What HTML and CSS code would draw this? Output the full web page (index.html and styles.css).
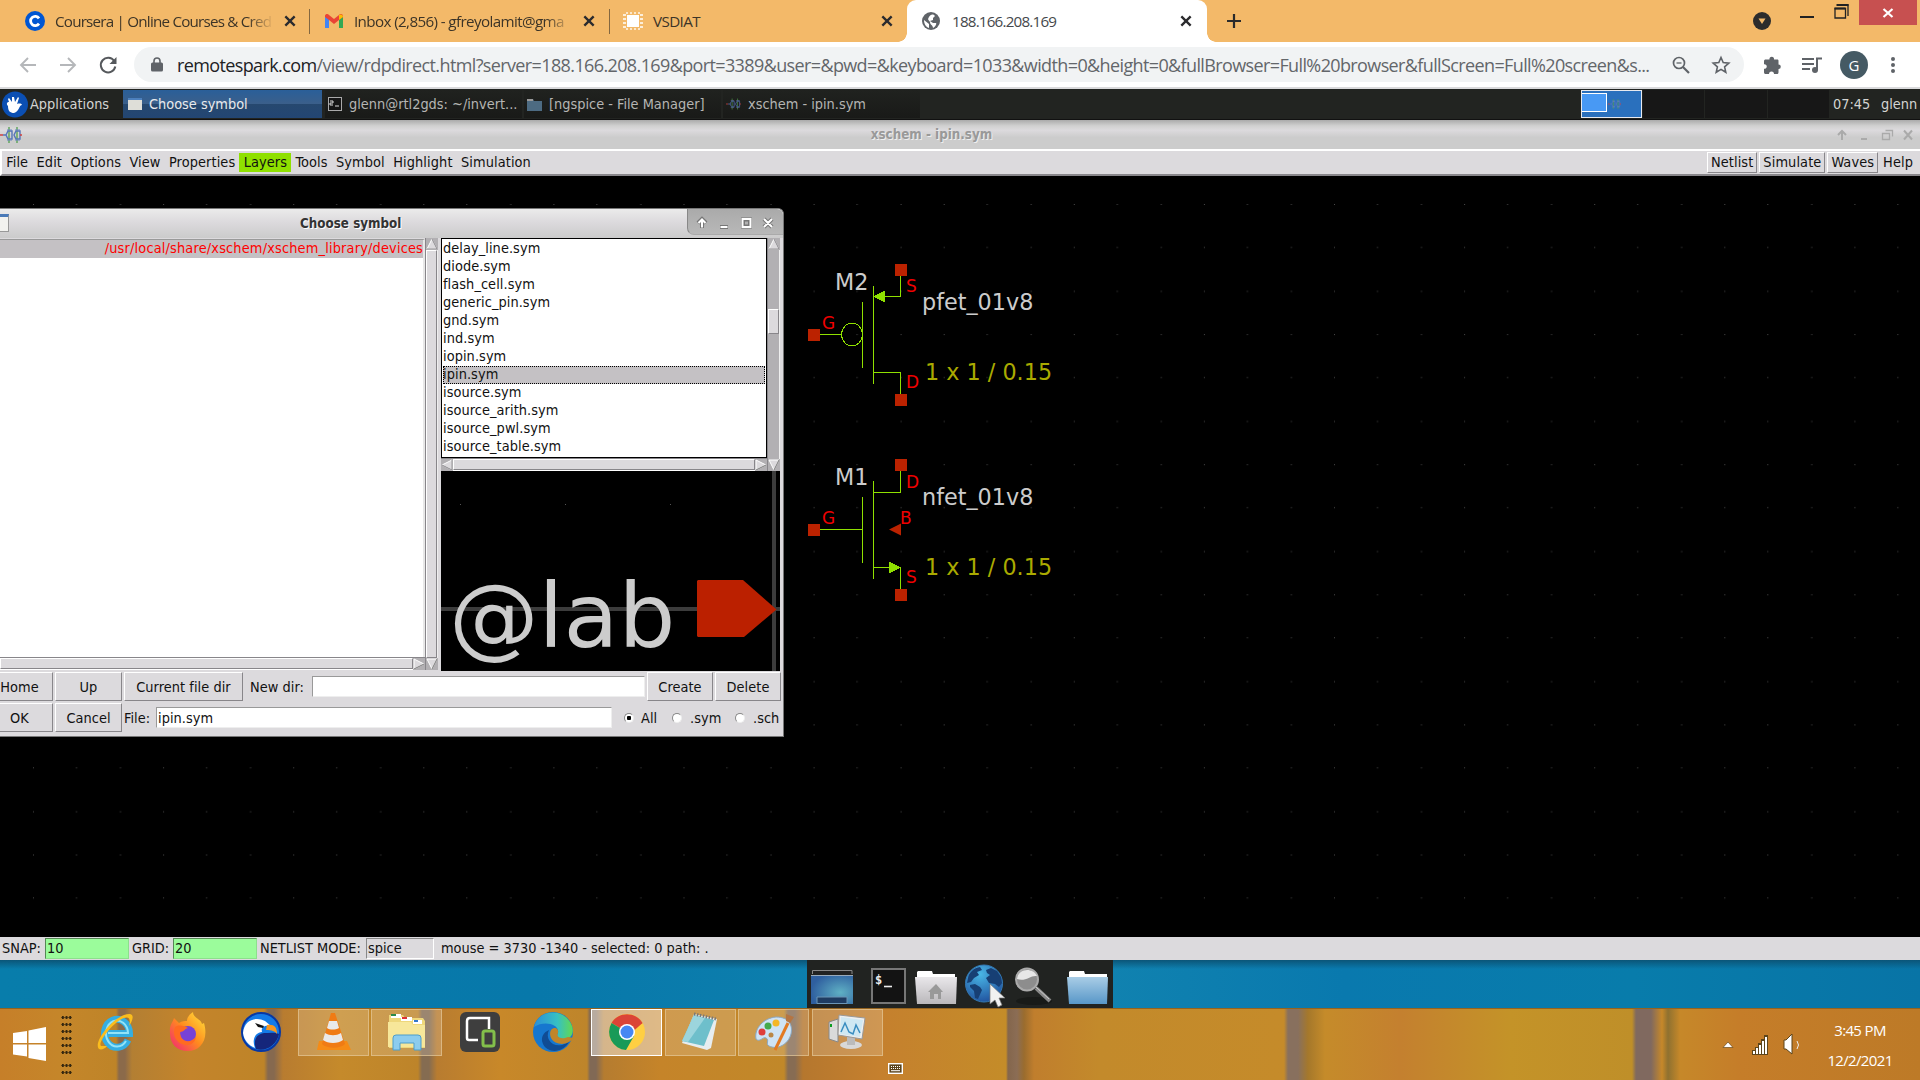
FILE: index.html
```html
<!DOCTYPE html>
<html lang="en">
<head>
<meta charset="utf-8">
<title>188.166.208.169</title>
<link rel="stylesheet" href="styles.css">
</head>
<body>
<svg class="defs" width="0" height="0">
  <defs>
    <symbol id="x" viewBox="0 0 12 12"><path d="M2 2l8 8M10 2l-8 8" stroke="#2b2b2e" stroke-width="2" fill="none"/></symbol>
    <symbol id="chip" viewBox="0 0 22 16"><path d="M9 0v16M17 0v16" stroke="#52a04e" stroke-width="1.300"/><path d="M3 8h3M6 8l2-4h4v8H8zM14 8l2-4h4v8h-4z" fill="none" stroke="#5575b8" stroke-width="1.400"/><path d="M7 3h5M7 13h5M15 3h5M15 13h5" stroke="#6b86c0"/><path d="M0 8h3M20 8h2" stroke="#d04040" stroke-width="1.500"/></symbol>
    <symbol id="up" viewBox="0 0 12 12"><rect width="12" height="12" fill="#b2b0b3"/><path d="M6 1L1 11h10z" fill="#dcdadd" stroke="#fff"/><path d="M6 1l5 10H1" fill="none" stroke="#88868a"/></symbol>
    <symbol id="down" viewBox="0 0 12 12"><rect width="12" height="12" fill="#b2b0b3"/><path d="M1 1h10L6 11z" fill="#dcdadd" stroke="#fff"/><path d="M11 1L6 11" stroke="#777"/></symbol>
    <symbol id="left" viewBox="0 0 12 12"><rect width="12" height="12" fill="#b2b0b3"/><path d="M1 6l10-5v10z" fill="#dcdadd" stroke="#fff"/><path d="M11 1v10L1 6" fill="none" stroke="#88868a"/></symbol>
    <symbol id="right" viewBox="0 0 12 12"><rect width="12" height="12" fill="#b2b0b3"/><path d="M11 6L1 1v10z" fill="#dcdadd" stroke="#fff"/><path d="M11 6L1 11" stroke="#777"/></symbol>
    <linearGradient id="blue" x1="0" y1="0" x2="0" y2="1"><stop offset="0" stop-color="#a9cde6"/><stop offset="1" stop-color="#5897c8"/></linearGradient>
    <linearGradient id="gray" x1="0" y1="0" x2="0" y2="1"><stop offset="0" stop-color="#e9e7ea"/><stop offset="1" stop-color="#bab8bb"/></linearGradient>
    <radialGradient id="earth" cx=".4" cy=".25" r=".8"><stop offset="0" stop-color="#49b6e6"/><stop offset="1" stop-color="#1f4f9c"/></radialGradient>
    <radialGradient id="desk" cx=".7" cy=".6" r=".7"><stop offset="0" stop-color="#5fb0c4"/><stop offset="1" stop-color="#2f5f9f"/></radialGradient>
    <linearGradient id="edge" x1="0" y1="0" x2="1" y2="0"><stop offset="0" stop-color="#2a8fd8"/><stop offset=".6" stop-color="#36c0c4"/><stop offset="1" stop-color="#63d94f"/></linearGradient>
    <linearGradient id="fire" x1="1" y1="0" x2="0" y2="1"><stop offset="0" stop-color="#ffe63c"/><stop offset=".5" stop-color="#ff8a1e"/><stop offset="1" stop-color="#f2207a"/></linearGradient>
  </defs>
</svg>

<header class="tabs">
  <div class="tab t1">
    <svg width="20" height="20" viewBox="0 0 20 20"><circle cx="10" cy="10" r="10" fill="#0056d2"/><path d="M14 7.400A4.600 4.600 0 1 0 14 12.600" fill="none" stroke="#fff" stroke-width="2.800"/></svg>
    <span class="label fade">Coursera | Online Courses &amp; Cred</span><svg class="close" width="14" height="14"><use href="#x"/></svg>
  </div>
  <div class="tab t2">
    <svg width="18" height="14" viewBox="0 0 18 14"><path d="M0 1.500V14h4V6l5 4 5-4v8h4V1.500C17-.3 15-.3 14 1L9 5 4 1C3-.3 1-.3 0 1.500z" fill="#ea4335"/><path d="M0 3v11h4V6z" fill="#4285f4"/><path d="M18 3v11h-4V6z" fill="#34a853"/><path d="M14 1v5l4-3C18 0 15.500 0 14 1z" fill="#fbbc04"/></svg>
    <span class="label fade">Inbox (2,856) - gfreyolamit@gma</span><svg class="close" width="14" height="14"><use href="#x"/></svg>
  </div>
  <div class="tab t3">
    <svg width="20" height="20" viewBox="0 0 20 20"><path d="M4 1v18M8 1v18M12 1v18M16 1v18M0 4h20M0 8h20M0 12h20M0 16h20" stroke="#fff" stroke-width="1.300"/><rect x="3" y="3" width="14" height="14" fill="#f3b969"/><rect x="4" y="4" width="12" height="12" fill="#fff"/></svg>
    <span class="label">VSDIAT</span><svg class="close" width="14" height="14"><use href="#x"/></svg>
  </div>
  <div class="tab active">
    <svg width="18" height="18" viewBox="0 0 18 18"><circle cx="9" cy="9" r="9" fill="#5f6368"/><path d="M2 8l5 4v4C4 15 2 12 2 8zM7 5c1-2 3-3 5-2l1 1-2 2v2l-3 1 3 2h3c1 1-1 4-3 5 0-3-3-3-3-6-1-2-3-2-1-5z" fill="#fff"/></svg>
    <span class="label">188.166.208.169</span><svg class="close" width="14" height="14"><use href="#x"/></svg>
  </div>
  <svg class="plus" width="16" height="16" viewBox="0 0 16 16"><path d="M8 1v14M1 8h14" stroke="#2b2b2b" stroke-width="2.200"/></svg>
  <div class="winctl">
    <svg width="18" height="18" viewBox="0 0 18 18"><circle cx="9" cy="9" r="9" fill="#2c2c2c"/><path d="M5.500 6.500h7L9 12z" fill="#f3b969"/></svg>
    <i class="min"></i>
    <svg class="restore" width="15" height="15" viewBox="0 0 15 15"><path d="M3 1h11v11M1 4.500h10.500v9.500H1z" fill="none" stroke="#222" stroke-width="1.300"/><path d="M2.500 1h12M.5 4.500h11" stroke="#222" stroke-width="2"/></svg>
    <div class="kill"><svg width="12" height="12" viewBox="0 0 12 12"><path d="M1.500 2l9 8M10.500 2l-9 8" stroke="#fff" stroke-width="2.200"/></svg></div>
  </div>
</header>

<div class="toolbar">
  <svg class="nav" width="18" height="18" viewBox="0 0 18 18"><path d="M17 9H2M9 2L2 9l7 7" fill="none" stroke="#b5b7ba" stroke-width="1.900"/></svg>
  <svg class="nav" width="18" height="18" viewBox="0 0 18 18"><path d="M1 9h15M9 2l7 7-7 7" fill="none" stroke="#b5b7ba" stroke-width="1.900"/></svg>
  <svg class="nav" width="18" height="18" viewBox="0 0 18 18"><path d="M15.200 5A7.300 7.300 0 1 0 16.300 10.500" fill="none" stroke="#55585c" stroke-width="2"/><path d="M17.500 1v7h-7z" fill="#55585c"/></svg>
  <div class="omni">
    <svg width="12" height="15" viewBox="0 0 12 15"><path d="M3 6V4a3 3 0 0 1 6 0v2" fill="none" stroke="#5f6368" stroke-width="1.600"/><rect y="5.500" width="12" height="9" rx="1.500" fill="#5f6368"/></svg>
    <span class="url"><b>remotespark.com</b>/view/rdpdirect.html?server=188.166.208.169&amp;port=3389&amp;user=&amp;pwd=&amp;keyboard=1033&amp;width=0&amp;height=0&amp;fullBrowser=Full%20browser&amp;fullScreen=Full%20screen&amp;s...</span>
    <svg width="18" height="18" viewBox="0 0 18 18"><circle cx="7" cy="7" r="5.500" fill="none" stroke="#5f6368" stroke-width="1.700"/><path d="M11 11l6 6" stroke="#5f6368" stroke-width="2.200"/><path d="M4.500 7h5" stroke="#5f6368" stroke-width="1.300"/></svg>
    <svg width="18" height="18" viewBox="0 0 18 18"><path d="M9 1.500l2.200 5.100 5.600.5-4.200 3.700 1.200 5.500L9 13.400l-4.800 2.900 1.200-5.500L1.200 7.100l5.600-.5z" fill="none" stroke="#5f6368" stroke-width="1.600"/></svg>
  </div>
  <div class="ext">
    <svg width="18" height="18" viewBox="0 0 18 18"><path d="M0 5.500C0 4 .5 3.500 2 3.500h3.500a2.300 2.300 0 1 1 4.500 0H13c1.500 0 1.500.5 1.500 2v3a2.300 2.300 0 1 1 0 4.600V16c0 1.500-.5 2-1.500 2h-3a2.400 2.400 0 1 0-5 0H2c-1.500 0-2-.5-2-2v-3.300a2.300 2.300 0 1 0 0-4.500z" fill="#5f6368"/></svg>
    <svg width="20" height="18" viewBox="0 0 20 18"><path d="M0 3h12M0 8h12M0 13h8M15 2v12M14 2.500h6" stroke="#5f6368" stroke-width="2"/><circle cx="13" cy="14" r="3" fill="#5f6368"/></svg>
    <span class="avatar">G</span>
    <svg width="6" height="18" viewBox="0 0 6 18"><g fill="#5f6368"><circle cx="3" cy="3" r="2"/><circle cx="3" cy="9" r="2"/><circle cx="3" cy="15" r="2"/></g></svg>
  </div>
</div>

<nav class="panel">
  <div class="apps"><svg width="29" height="27" viewBox="0 0 29 27"><ellipse cx="15" cy="13.500" rx="13" ry="13" fill="#0b4fb3"/><path d="M8 15c-2-2-1-4 1-4l-1-3 1-1 3 4 0-5h2l1 5 3-5 1 1-2 6c3-1 5 0 5 1-3 0-3 7-8 8-4 0-6-2-6-7z" fill="#fff"/></svg><span>Applications</span></div>
  <div class="task on"><svg width="14" height="12" viewBox="0 0 14 12"><rect width="14" height="12" fill="#deded8"/><path d="M0 1h14" stroke="#4c80bd" stroke-width="2"/></svg><span>Choose symbol</span></div>
  <div class="task"><svg width="14" height="14" viewBox="0 0 14 14"><rect x=".5" y=".5" width="13" height="13" fill="#161616" stroke="#aaa"/><path d="M2 4h3v2h-3v2h3M7 9h4" stroke="#ddd" fill="none"/></svg><span>glenn@rtl2gds: ~/invert...</span></div>
  <div class="task"><svg width="15" height="13" viewBox="0 0 15 13"><path d="M0 1h6l1 2h8v10H0z" fill="#4d6b82"/><path d="M0 1h6v2h-6z" fill="#999"/></svg><span>[ngspice - File Manager]</span></div>
  <div class="task"><svg class="dim" width="15" height="14"><use href="#chip"/></svg><span>xschem - ipin.sym</span></div>
  <div class="pager"><div class="cell cur"><i></i><svg width="13" height="14"><use href="#chip"/></svg></div><div class="cell"></div><div class="cell"></div><div class="cell"></div></div>
  <span class="clock">07:45</span><span class="user">glenn</span>
</nav>

<div class="wtitle">
  <svg width="22" height="16"><use href="#chip"/></svg>
  <span>xschem - ipin.sym</span>
  <svg width="76" height="14" viewBox="0 0 76 14" fill="none" stroke="#aaa" stroke-width="2"><path d="M5 12V4M1 7l4-4 4 4M24 11h6"/><path d="M45.500 5.500h7v6h-7zM48.500 2.500h7v6" stroke-width="1.300"/><path d="M67 2.500l8 9M75 2.500l-8 9"/></svg>
</div>

<div class="menu">
  <span>File</span><span>Edit</span><span>Options</span><span>View</span><span>Properties</span><span class="hot">Layers</span><span>Tools</span><span>Symbol</span><span>Highlight</span><span>Simulation</span>
  <div class="rbtns"><span class="raised">Netlist</span><span class="raised">Simulate</span><span class="raised">Waves</span><span class="help">Help</span></div>
</div>

<main class="canvas">
  <svg class="sch" width="1920" height="761" viewBox="0 176 1920 761">
    <defs><pattern id="dots" x="33" y="204" width="130.100" height="130.100" patternUnits="userSpaceOnUse"><path d="M0 .5h1M43 .5h1M87 .5h1M0 43.500h1M43 43.500h1M87 43.500h1M0 87.500h1M43 87.500h1M87 87.500h1" stroke="#4a4a4a"/></pattern></defs>
    <rect y="176" width="1920" height="761" fill="#000"/><rect y="176" width="1920" height="761" fill="url(#dots)"/>
    <g fill="none" stroke="#8fe000" shape-rendering="crispEdges">
      <path d="M900.500 276v20.500h-27M873.500 286v98M873.500 372.500h27V394M862.500 302v66M820 334.500h21"/>
      <ellipse cx="852" cy="334.500" rx="10.500" ry="11.300"/>
      <path d="M900.500 471v21.500h-27M873.500 481v98M873.500 567.500h27V589M862.500 497v66M820 529.500h42"/>
      <path d="M873 296.500l12-6v12zM901 567.500l-12-6v12z" fill="#8fe000" stroke="none"/>
    </g>
    <g fill="#bb2200"><path d="M895 264h12v12h-12zM895 394h12v12h-12zM808 329h12v12h-12zM895 459h12v12h-12zM895 589h12v12h-12zM808 524h12v12h-12zM889 529.500l12-6v12z"/></g>
    <g class="net"><text x="835" y="290">M2</text><text x="922" y="310">pfet_01v8</text><text x="835" y="485">M1</text><text x="922" y="505">nfet_01v8</text></g>
    <g class="size"><text x="925" y="380">1 x 1 / 0.15</text><text x="925" y="575">1 x 1 / 0.15</text></g>
    <g class="pin"><text x="906" y="292">S</text><text x="906" y="388">D</text><text x="822" y="329">G</text><text x="906" y="488">D</text><text x="900" y="524">B</text><text x="822" y="524">G</text><text x="906" y="583">S</text></g>
  </svg>

  <section class="dialog">
    <div class="dtitle"><i class="dicon"></i><span>Choose symbol</span>
      <div class="dctl"><svg width="76" height="14" viewBox="0 0 76 14" fill="none"><g stroke="#777" stroke-width="4"><path d="M5 12V4M1 7l4-4 4 4M23 11h8M46 3.500h7v7h-7zM67 3l8 8M75 3l-8 8"/></g><g stroke="#fff" stroke-width="2"><path d="M5 11.500V4M1.500 7L5 3.500 8.500 7M23.500 11h7M45.500 3h8v8h-8zM67 3l8 8M75 3l-8 8"/></g></svg></div>
    </div>
    <div class="panes">
      <div class="dirs"><div class="dirlist"><div>/usr/local/share/xschem/xschem_library/devices</div></div>
        <div class="vsb"><svg width="12" height="12"><use href="#up"/></svg><i></i><svg width="12" height="12"><use href="#down"/></svg></div>
        <div class="hsb"><i></i><svg width="12" height="12"><use href="#right"/></svg></div>
      </div>
      <div class="files">
        <div class="filelist"><div>delay_line.sym</div><div>diode.sym</div><div>flash_cell.sym</div><div>generic_pin.sym</div><div>gnd.sym</div><div>ind.sym</div><div>iopin.sym</div><div class="sel">ipin.sym</div><div>isource.sym</div><div>isource_arith.sym</div><div>isource_pwl.sym</div><div>isource_table.sym</div></div>
        <div class="vsb fv"><svg width="12" height="12"><use href="#up"/></svg><i></i><svg width="12" height="12"><use href="#down"/></svg></div>
        <div class="hsb"><svg width="12" height="12"><use href="#left"/></svg><i></i><svg width="12" height="12"><use href="#right"/></svg></div>
        <svg class="preview" width="339" height="200" viewBox="441 471 339 200"><rect x="441" y="471" width="339" height="200" fill="#000"/><path d="M441 609h339M774 471v200" stroke="#3c3c3c" stroke-width="4"/><path d="M460 504.500h1M565 504.500h1M670 504.500h1" stroke="#555"/><path d="M698 580h45l33.500 29.500L744 637h-46l-1-1v-55z" fill="#bb2000"/><text x="449" y="647">@lab</text></svg>
      </div>
    </div>
    <div class="row r1"><span class="btn b1">Home</span><span class="btn b2">Up</span><span class="btn b3">Current file dir</span><label>New dir:</label><span class="entry"></span><span class="btn b4">Create</span><span class="btn b5">Delete</span></div>
    <div class="row r2"><span class="btn b1">OK</span><span class="btn b2">Cancel</span><label>File:</label><span class="entry">ipin.sym</span><i class="radio on"></i><em class="e1">All</em><i class="radio"></i><em class="e2">.sym</em><i class="radio"></i><em class="e3">.sch</em></div>
  </section>
</main>

<div class="status"><span class="w1">SNAP:</span><span class="green">10</span><span class="w2">GRID:</span><span class="green">20</span><span class="w3">NETLIST MODE:</span><span class="mode">spice</span><span class="mouse">mouse = 3730 -1340 - selected: 0 path: .</span></div>

<div class="desktop">
  <div class="dock"><svg width="306" height="48" viewBox="807 960 306 48">
    <path d="M812.500 974v-3.500h39.500v3.500" fill="#222" stroke="#888"/><rect x="811" y="975" width="42" height="29" fill="url(#desk)"/><path d="M811 975.500h42" stroke="#9ab"/><path d="M817 1003.500v-6.500h30v6.500z" fill="#1f3c62" stroke="#6b95b6"/>
    <rect x="872" y="969" width="33" height="34" fill="#131313" stroke="#777" stroke-width="2"/><text class="term" x="875" y="984">$</text><path d="M884 986.500h8" stroke="#eee" stroke-width="1.600"/>
    <path d="M917 972l1-1h14l1 3h22v7h-38z" fill="#fff"/><path d="M915 977h42l-1 27h-39z" fill="url(#gray)"/><path d="M928 992l8-8 7 8h-2v7h-3v-5h-4v5h-4v-7z" fill="#999"/>
    <circle cx="984" cy="983.500" r="18.500" fill="url(#earth)" stroke="#347ab5"/><path d="M968 978c1-6 6-10 12-11l2 3-5 2 2 3-5 3-3 4-4 1zM970 985l5-1 5 3 2 3-4 9-3-1-1-7-4-4zM986 970l5-2 6 3 4 6 1 6-3 4-4-3-6-1-3-5 4-3-3-2z" fill="#173f74"/>
    <path d="M990 984v20l5-4 3 7 4-2-3-7h6z" fill="#f1f1f1" stroke="#777" stroke-width=".7"/>
    <ellipse cx="1034" cy="1001" rx="18" ry="4" fill="#181a18"/><path d="M1036 988l14 13" stroke="#888" stroke-width="4"/><path d="M1036 987l13 12" stroke="#ccc"/><circle cx="1027" cy="979.500" r="11" fill="#8d8d8d" stroke="#aaa" stroke-width="2"/><path d="M1017 979c1-11 16-12 20-3-7-1-11 6-20 3z" fill="#e7e7e7"/>
    <path d="M1069 972l1-1h14l1 3h22v7h-38z" fill="#fff"/><path d="M1067 977h41l-1 27h-38z" fill="url(#blue)"/>
  </svg></div>
</div>

<footer class="taskbar">
  <svg class="start" width="34" height="34" viewBox="0 0 34 34"><path d="M0 6l14-2v12H0zM15.500 3.500L33 0v16H15.500zM0 17.500h14v12L0 27.500zM15.500 17.500H33V34l-17.500-3z" fill="#fff"/></svg>
  <div class="grip"><i></i><i></i></div>
  <div class="icons">
    <div class="ico"><svg width="40" height="40" viewBox="0 0 40 40"><path d="M33 28a12.500 14 0 1 1 1.500-6.500H13" fill="none" stroke="#35aee2" stroke-width="7"/><path d="M31 29a11 13 0 1 1 2-8H13" fill="none" stroke="#92e3f8" stroke-width="2"/><path d="M4 37C-3 30 21 1 35 2c5 1 2 8-1 12C36 7 34 4 29 6 19 9 2 31 6 34l6 0c-2 3-6 4-8 3z" fill="#fbbd1d"/></svg></div>
    <div class="ico"><svg width="40" height="40" viewBox="0 0 40 40"><path d="M2 21C1 13 5 10 6 6l5 5c3-2 6-2 8-2 0-4 3-7 6-9 0 6 8 7 9 12l2-1c5 17-4 28-16 28C9 39 2 32 2 21z" fill="url(#fire)"/><circle cx="20" cy="22" r="8" fill="#7742d6"/><path d="M7 15c5-3 9-1 13 1-4 1-4 4-8 4 0 10 10 12 16 5-1 7-8 10-14 7-6-2-10-10-7-17z" fill="#ff6b20"/></svg></div>
    <div class="ico"><svg width="40" height="40" viewBox="0 0 40 40"><circle cx="20" cy="20" r="19" fill="#137be8" stroke="#0738a5" stroke-width="2"/><path d="M2 21C3 8 15 4 24 9l6 5c-8-1-10 2-9 6-8 1-10 9-7 16C7 33 3 28 2 21z" fill="#fff"/><path d="M15 37c-3-8 0-15 8-16 5 0 11-1 15 1-2 11-13 18-23 15z" fill="#15267b"/><path d="M26 13c7-1 10 2 10 9-2-3-5-4-11-4z" fill="#f79720"/><path d="M14 11l9 3-1 2-5-1z" fill="#111"/></svg></div>
    <div class="ico box"><svg width="40" height="40" viewBox="0 0 40 40"><path d="M5 29h28l4 9H3z" fill="#f68b15"/><path d="M17 1h4l10 31c-5 5-18 5-23 0z" fill="#f07b14"/><path d="M15 9h8l2 7c-4 2-9 2-12 0zM11 21c5 3 11 3 16 0l2 7c-5 4-15 4-20 0z" fill="#e9e9e9"/></svg></div>
    <div class="ico box"><svg width="40" height="40" viewBox="0 0 40 40"><path d="M2 3h14l2 3h18l2 3v27H2z" fill="#eed77b"/><path d="M4 2h10v4H4zM14 5h11v4H14zM26 8h9v4h-9z" fill="#fff"/><path d="M4 3h5" stroke="#2b8a4a" stroke-width="2"/><path d="M15 6h5" stroke="#d33" stroke-width="2"/><path d="M27 9h4" stroke="#37c" stroke-width="2"/><path d="M1 10h23l2 3h12v22H1z" fill="#f7e79a"/><path d="M6 38V26q0-3 3-3h22q3 0 3 3v12h-7v-7H13v7z" fill="#8cccee" stroke="#4d9dca"/></svg></div>
    <div class="ico"><svg width="40" height="40" viewBox="0 0 40 40"><rect width="40" height="40" rx="6" fill="#3e3e3e"/><path d="M18 28H9q-2 0-2-2V9q0-3 3-3h19v11" fill="none" stroke="#fff" stroke-width="2.500"/><rect x="23" y="19" width="11" height="15" rx="2" fill="none" stroke="#83bf4b" stroke-width="3"/></svg></div>
    <div class="ico"><svg width="40" height="40" viewBox="0 0 40 40"><circle cx="20" cy="20" r="20" fill="#1677cf"/><path d="M1 15C5-3 32-5 39 14c3 9-3 14-10 13-5 0-6-3-4-6 2-9-14-13-24-6z" fill="url(#edge)"/><path d="M16 18c-4 8 2 17 13 15l7-3c-7 12-22 11-26 2-3-7 1-12 6-14z" fill="#104c94"/><path d="M18 18c-3 5 1 14 11 14 4 0 9-3 12-6l-6-1c-7 3-12 0-10-4 1-4-3-7-7-3z" fill="#bf852a"/></svg></div>
    <div class="ico box live"><svg width="36" height="36" viewBox="0 0 36 36"><circle cx="18" cy="18" r="18" fill="#ffcf42"/><path d="M18 18L2.500 9A18 18 0 0 1 33.500 9z" fill="#db4437"/><path d="M18 18L2.500 9A18 18 0 0 0 17 36l8-14z" fill="#189a58"/><path d="M18 9h15.500l-9 8z" fill="#db4437"/><circle cx="18" cy="18" r="8" fill="#fff"/><circle cx="18" cy="18" r="6.500" fill="#4687f3"/></svg></div>
    <div class="ico box"><svg width="40" height="40" viewBox="0 0 40 40"><path d="M14 2l23 5-6 29-4 2L2 31z" fill="#e7edf0"/><path d="M14 3l20 5L24 34 2 29z" fill="#6ebfcb"/><path d="M14 3l11 3L8 30l-6-1z" fill="#9cd5dd"/><path d="M14 2l22 5" stroke="#777" stroke-width="3" stroke-dasharray="1.500 1.500"/></svg></div>
    <div class="ico box"><svg width="40" height="40" viewBox="0 0 40 40"><path d="M2 27C0 16 10 6 22 5c13 0 17 8 15 17-3 11-14 16-22 12-4-2 1-6-3-8-3-2-6 5-10 1z" fill="#cfe3f4" stroke="#8aa9c4"/><circle cx="8" cy="20" r="3.500" fill="#df3e3b"/><circle cx="14" cy="14" r="3.500" fill="#45aa4c"/><circle cx="22" cy="11" r="3.500" fill="#f5b726"/><circle cx="17" cy="23" r="2.500" fill="#bb8745"/><path d="M34 11L21 38" stroke="#e27a23" stroke-width="3"/><path d="M32 2l8 3-4 6-4-2z" fill="#b57542"/></svg></div>
    <div class="ico box"><svg width="40" height="40" viewBox="0 0 40 40"><path d="M2 10l9-3v23l-9-3z" fill="#dadada" stroke="#888"/><path d="M3 12h2v3H3z" fill="#0b9d22"/><ellipse cx="24" cy="33" rx="11" ry="4" fill="#d8d8d8"/><path d="M20 24h8v9h-8z" fill="#bbb"/><path d="M12 3l26 3-3 21-24-4z" fill="#eee" stroke="#999"/><path d="M14 5l22 3-3 17-20-3z" fill="#cfe8f3"/><path d="M14 20l4-9 4 9 4 2 3-9 4 8" fill="none" stroke="#3a8dc0" stroke-width="1.500"/></svg></div>
  </div>
  <svg class="kbd" width="15" height="11" viewBox="0 0 15 11"><rect x=".7" y=".7" width="13.600" height="9.600" fill="#5b431c" stroke="#fff" stroke-width="1.400"/><path d="M3 3.500h10M3 5.500h10" stroke="#fff" stroke-dasharray="1 1"/><path d="M3 7.700h9" stroke="#fff"/></svg>
  <div class="tray">
    <svg width="80" height="24" viewBox="1722 1034 80 24"><path d="M1723 1047.500l5-5.500 5 5.500z" fill="#fff" stroke="#684718" stroke-width=".7"/><path d="M1752 1055v-5h3v-3h3v-4h3v-4h3v-4h4v20z" fill="#5c451b"/><path d="M1753 1054v-3h2v3zM1756 1054v-6h2v6zM1759 1054v-9h2v9zM1762 1054v-13h2v13zM1765 1054v-17h2v17z" fill="#fff"/><path d="M1784 1040h2l6-6v20l-6-5h-2z" fill="#fff" stroke="#5c451b"/><path d="M1797 1041q3 4 0 8" fill="none" stroke="#eee"/></svg>
    <div class="time"><span>3:45 PM</span><span>12/2/2021</span></div>
  </div>
</footer>
</body>
</html>
```

FILE: styles.css
```css
* { box-sizing: border-box; }
body { margin: 0; width: 1920px; height: 1080px; overflow: hidden; display: flex; flex-direction: column; background: #000; font: 14.4px/18px "DejaVu Sans Condensed", "DejaVu Sans", sans-serif; font-stretch: condensed; color: #111; white-space: nowrap; }
svg { display: block; flex: none; overflow: visible; }
.defs { position: absolute; }
i, em { font-style: normal; }

/* browser tab strip */
.tabs { height: 42px; flex: none; display: flex; align-items: center; background: #f3b969; font: 15.2px/20px "Open Sans", sans-serif; letter-spacing: -.62px; color: #3c3427; }
.tab { height: 42px; display: flex; align-items: center; }
.tab .label { flex: 1; }
.fade { -webkit-mask-image: linear-gradient(90deg, #000 88%, transparent); mask-image: linear-gradient(90deg, #000 88%, transparent); }
.t1 .label { letter-spacing: -.78px; }
.t1 { width: 310px; padding: 0 13px 0 25px; gap: 10px; background: linear-gradient(#836740, #836740) 309px 9px / 1px 25px no-repeat; }
.t2 { width: 300px; padding: 0 14px 0 15px; gap: 11px; background: linear-gradient(#836740, #836740) 299px 9px / 1px 25px no-repeat; }
.t3 { width: 297px; padding: 0 13px; gap: 10px; }
.t1 .close, .t2 .close { margin-left: -1px; }
.active { position: relative; width: 300px; background: #fff; border-radius: 9px 9px 0 0; padding: 0 14px 0 15px; gap: 12px; color: #45484c; }
.active .label { letter-spacing: -.8px; }
.active::before, .active::after { content: ""; position: absolute; bottom: 0; width: 9px; height: 9px; }
.active::before { left: -9px; background: radial-gradient(circle at 0 0, transparent 8.500px, #fff 9px); }
.active::after { right: -9px; background: radial-gradient(circle at 100% 0, transparent 8.500px, #fff 9px); }
.plus { margin-left: 19px; }
.winctl { margin-left: auto; margin-right: 3px; display: flex; align-items: flex-start; height: 42px; }
.winctl > svg:first-child { margin: 12px 29px 0 0; }
.min { width: 14px; height: 2px; background: #222; margin: 16px 20px 0 0; }
.restore { margin: 4px 10px 0 0; }
.kill { width: 58px; height: 25px; background: #c75050; display: grid; place-items: center; }

/* address bar */
.toolbar { height: 47px; flex: none; display: flex; align-items: center; background: #fff; border-bottom: 2px solid #dadadc; padding-left: 19px; font-family: "Open Sans", sans-serif; font-stretch: normal; }
.nav { margin-right: 22px; }
.nav + .nav + .nav { margin-right: 18px; }
.nav + .nav { margin-right: 22px; }
.omni { width: 1610px; height: 35px; border-radius: 18px; background: #f1f3f4; display: flex; align-items: center; padding: 0 14px 0 17px; margin-left: -1px; }
.url { width: 1480px; margin: 0 16px 0 14px; font-size: 18px; line-height: 28px; letter-spacing: -.62px; color: #63666a; }
.url b { font-weight: 400; color: #202124; }
.omni svg:last-child { margin-left: 22px; }
.ext { margin-left: 20px; display: flex; align-items: center; gap: 20px; }
.avatar { width: 28px; height: 28px; border-radius: 50%; background: #455a64; color: #fff; display: grid; place-items: center; font-size: 15px; margin-left: -2px; }
.ext svg:last-child { margin-left: 2px; }

/* remote desktop panel */
.panel { height: 31px; flex: none; display: flex; align-items: center; background: #222421; color: #d4d4d2; border-bottom: 1px solid #111; }
.apps { width: 123px; display: flex; align-items: center; gap: 1px; }
.task { width: 197px; height: 28px; margin-right: 2px; padding-left: 2px; display: flex; align-items: center; gap: 7px; background: linear-gradient(#20221f, #191a18); color: #b5b5b3; }
.task svg { margin-left: 1px; }
.task.on { width: 199px; margin-right: 3px; padding-left: 4px; background: linear-gradient(#2a5f99, #3b5f8a 50%, #26486f 51%, #234673); color: #e8eaec; }
.dim { opacity: .75; }
.pager { display: flex; width: 248px; height: 28px; margin-left: auto; gap: 1px; }
.cell { flex: 1; background: #171717; }
.cur { flex: none; width: 61px; border: 1px solid #e8eaf0; background: #2a70bd; display: flex; align-items: center; }
.cur i { width: 25px; height: 19px; margin-top: -3px; border: 1px solid #fff; border-left: 0; background: #4899f4; }
.cur svg { margin-left: 1px; }
.clock { width: 48px; padding-left: 4px; }
.user { width: 43px; padding-left: 4px; }

/* schematic editor window */
.wtitle { height: 31px; flex: none; display: grid; grid-template-columns: 26px 1fr 83px; align-items: center; background: linear-gradient(#aaa 0, #d0d0d0 20%, #dcdadd 35%, #ccc 60%, #ccc); border-bottom: 2px solid #fff; font: bold 13.300px/18px "DejaVu Sans Condensed", "DejaVu Sans", sans-serif; font-stretch: condensed; color: #999; text-align: center; text-shadow: 1px 1px #eee; }
.wtitle span { padding-top: 1px; }
.menu { height: 25px; flex: none; display: flex; align-items: center; background: #dcdadd; border-bottom: 2px solid #88868a; border-left: 2px solid #fff; letter-spacing: .1px; }
.menu > span { padding: 0 4.200px; line-height: 19px; }
.menu .hot { background: #8fe000; }
.rbtns { margin-left: auto; display: flex; gap: 2px; align-items: center; padding-right: 4px; }
.rbtns span { padding: 0 3px; line-height: 19px; }
.raised { border: 1px solid #fff; border-right-color: #88868a; border-bottom-color: #88868a; }
.canvas { position: relative; height: 761px; flex: none; overflow: hidden; }
.net, .size { font: 22.300px "DejaVu Sans", sans-serif; fill: #ccc; }
.size { fill: #aaaa00; }
.pin { font: 17px "DejaVu Sans", sans-serif; fill: #f00000; }

/* symbol chooser, a floating window */
.dialog { position: absolute; left: 0; top: 32px; width: 784px; height: 529px; background: #dcdadd; border: solid #777; border-width: 1px 1px 1px 0; border-radius: 0 6px 0 0; display: flex; flex-direction: column; }
.dtitle { height: 29px; display: flex; background: linear-gradient(#ebebeb, #dcdadd 45%, #cbcbcb); border-radius: 0 6px 0 0; font: bold 13.300px/29px "DejaVu Sans Condensed", "DejaVu Sans", sans-serif; font-stretch: condensed; color: #333; text-shadow: 1px 1px #fff; }
.dicon { width: 9px; height: 18px; margin-top: 5px; background: #f2f2ef; border: 1px solid #999; border-left: 0; border-top: 3px solid #4a7ab8; }
.dtitle span { margin-left: 291px; flex: 1; }
.dctl { width: 96px; height: 26px; padding: 7px 0 0 9px; background: linear-gradient(#aaa, #b8b8b8); border-radius: 0 6px 0 7px; border-left: 1px solid #888; border-bottom: 1px solid #aaa; }
.panes { display: flex; height: 433px; gap: 3px; }
.dirs { width: 438px; display: grid; grid-template: 419px 13px / 425px 13px; }
.dirlist { margin-top: 1px; border-top: 1px solid #999; border-right: 2px solid #e8e8e8; background: #fff; color: #f00; }
.dirlist div { background: #c4c1c4; text-align: right; letter-spacing: .17px; line-height: 17px; padding-bottom: 1px; }
.vsb { background: #b2b0b3; display: flex; flex-direction: column; border-left: 1px solid #88868a; border-right: 1px solid #eee; }
.vsb i, .hsb i { flex: 1; background: #dcdadd; border: 1px solid #fff; border-right-color: #88868a; border-bottom-color: #88868a; }
.dirs .vsb { grid-row: span 2; }
.hsb { background: #b2b0b3; display: flex; border-top: 1px solid #88868a; border-bottom: 1px solid #fff; }
.files { width: 340px; display: grid; grid-template: 220px 13px 200px / 326px 13px; letter-spacing: .07px; }
.filelist { border: 1px solid #000; background: #fff; padding: 1px; }
.filelist div { height: 18px; line-height: 16px; }
.sel { background: #c4c1c4; outline: 1px dotted #000; outline-offset: -1px; }
.fv { grid-row: span 2; }
.fv i { flex: none; height: 25px; margin: 59px 0 auto; }
.preview { overflow: hidden; grid-column: span 2; letter-spacing: 0; }
.preview text { font: 89.600px "DejaVu Sans", sans-serif; fill: #ccc; }
.row { display: flex; align-items: center; height: 31px; letter-spacing: .05px; }
.btn { height: 29px; line-height: 28px; border: 1px solid #fff; border-right-color: #88868a; border-bottom-color: #88868a; text-align: center; margin-right: 2px; flex: none; }
.b1 { width: 53px; padding-right: 13px; border-left: 0; }
.b2 { width: 67px; }
.b3 { width: 119px; }
.b4, .b5 { width: 66px; }
.row label { padding-top: 1px; flex: none; }
.r1 label { width: 62px; margin-left: 5px; }
.entry { height: 21px; line-height: 20px; border: 1px solid #999; border-color: #999 #eee #eee #999; background: #fff; padding-left: 1px; flex: none; }
.r1 .entry { width: 333px; margin-right: 2px; }
.r2 label { width: 32px; }
.r2 .entry { width: 456px; margin-right: 12px; }
.radio { width: 10px; height: 10px; border-radius: 50%; background: #fff; border: 1px solid #aaa; border-color: #888 #eee #eee #888; flex: none; }
.radio.on { background: radial-gradient(circle, #000 2px, #fff 2.500px); }
.e1 { margin: 0 9px 0 7px; width: 22px; }
.e2 { margin: 0 9px 0 8px; width: 36px; }
.e3 { margin-left: 8px; }

/* status bar */
.status { height: 23px; flex: none; display: flex; align-items: center; background: #dcdadd; padding-left: 2px; line-height: 17px; }
.status > span { padding-bottom: 1px; }
.w1 { width: 43px; }
.w2 { width: 44px; padding-left: 3px; }
.w3 { width: 109px; padding-left: 3px; }
.green, .mode { height: 21px; line-height: 18px; width: 84px; padding-left: 1px; background: #9bfc9b; border: 1px solid #558855; border-right-color: #8ce08c; border-bottom-color: #8ce08c; }
.mode { width: 68px; background: #dcdadd; border-color: #888 #fff #fff #888; }
.mouse { margin-left: 7px; }

.desktop { height: 48px; flex: none; display: flex; background: linear-gradient(#0b5578, transparent 9px), linear-gradient(90deg, #087dab, #0778aa 28%, #1284b0 55%, #0979ae 70%, #087cab 85%, #0874a6); }
.dock { margin-left: 807px; width: 306px; background: #212321; }
.term { font: bold 12px "DejaVu Sans Mono", monospace; fill: #eee; }

/* host taskbar */
.taskbar { height: 72px; flex: none; display: flex; border-top: 1px solid #94631f; background: linear-gradient(90deg, #c67f29 0, #c5862a 60px, #be8428 116px, #8b6a4a 119px, #8b6a4a 125px, #b37f33 132px, #c4842b 190px, #be8428 264px, #86694f 268px, #86694f 274px, #b87c30 283px, #c58a2b 340px, #bd842a 418px, #856c51 422px, #856c51 429px, #b87c30 437px, #c88829 500px, #be852b 587px, #816955 590px, #816955 596px, #b57c30 604px, #c58429 660px, #c18829 784px, #876c53 788px, #876c53 795px, #b5772e 803px, #c5802e 880px, #c48c29 1006px, #84664c 1008px, #8b6d55 1017px, #9a6c2e 1024px, #c07e2d 1034px, #c38a2b 1100px, #c58b2a 1284px, #88705e 1288px, #88705e 1298px, #a5782b 1308px, #c58b2a 1325px, #c4802f 1400px, #c49328 1510px, #bf8f29 1632px, #80695f 1636px, #80695f 1651px, #c68829 1662px, #8f7130 1668px, #c68829 1680px, #c57d29 1740px, #bd7a27); }
.start { margin: 18px 14px 0 13px; }
.grip { width: 11px; margin: 5px 24px 0 0; }
.grip i { display: block; height: 42px; background: radial-gradient(circle, #35270f 1.200px, transparent 1.700px) 0 0 / 3.700px 7px; }
.grip i + i { height: 14px; margin-top: 6px; }
.icons { display: flex; gap: 2px; margin-left: -17px; }
.ico { width: 71px; height: 47px; display: grid; place-items: center; }
.box { background: #ffffff2e; border: 1px solid #e6c999aa; }
.live { background: #ffffff70; border-color: #fff; }
.ico svg { margin-top: -1px; }
.icons .ico:nth-child(n+8) { margin-left: 1px; margin-right: -.5px; }
.kbd { margin: 54px 0 0 6px; }
.tray { margin-left: auto; width: 198px; display: flex; color: #fff; font: 15px/30px "Open Sans", sans-serif; letter-spacing: -.65px; }
.tray > svg { margin-top: 25px; }
.time { width: 104px; margin-left: 4px; display: flex; flex-direction: column; text-align: center; padding-top: 6px; padding-left: 4px; }
```
